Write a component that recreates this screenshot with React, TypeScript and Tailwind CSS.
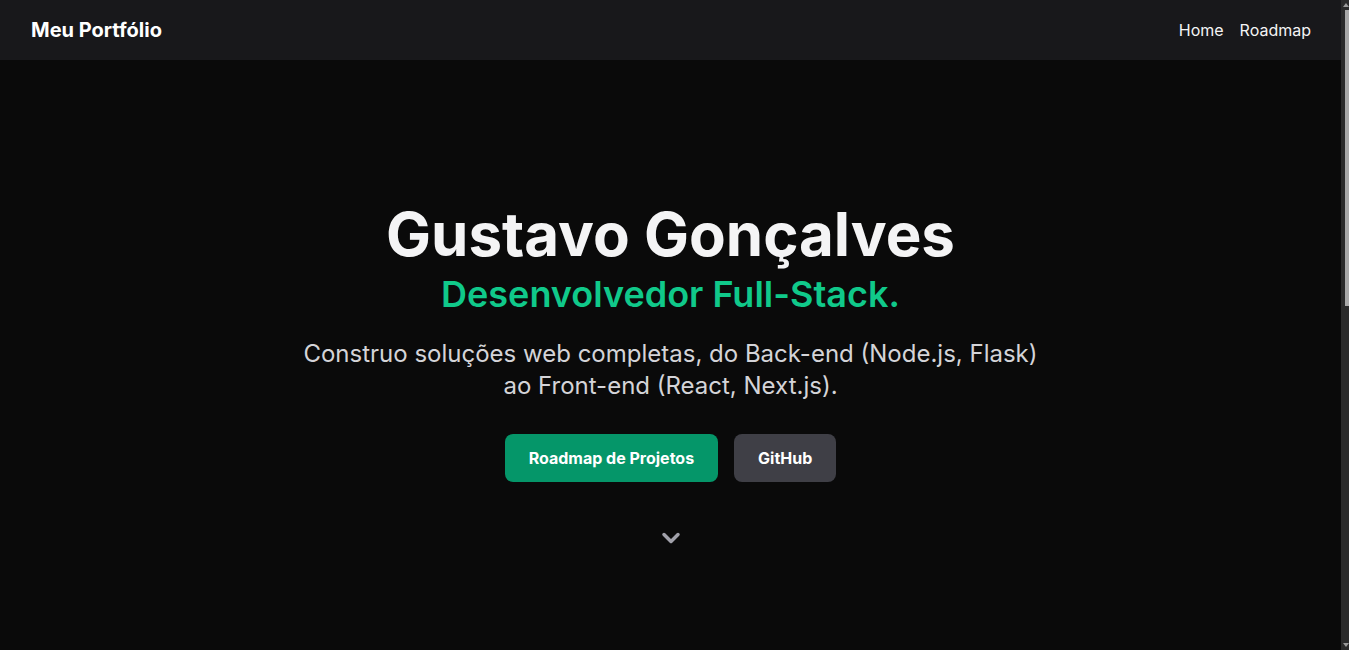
import React from "react";

export default function App() {
  return (
    <div
      className="flex h-screen overflow-hidden bg-[#0a0a0a] text-white"
      style={{ fontFamily: "Inter, 'Noto Sans', sans-serif" }}
    >
      <main className="flex-1 min-w-0 h-full overflow-hidden">
        <header className="h-[60px] bg-[#18181b] flex items-center justify-between pl-[31px] pr-[30px]">
          <div className="text-[20px] font-bold text-white">Meu Portfólio</div>
          <nav className="flex items-center gap-4 text-[16px] text-[#f4f4f5]">
            <a>Home</a>
            <a>Roadmap</a>
          </nav>
        </header>
        <section className="h-[650px] flex flex-col items-center justify-center text-center pb-[16px]">
          <h1 className="text-[60px] leading-[64px] font-bold text-[#f4f4f5]">Gustavo Gonçalves</h1>
          <h2 className="mt-[6px] text-[36px] leading-[44px] font-semibold text-[#10c98a]">Desenvolvedor Full-Stack.</h2>
          <p className="mt-[22px] max-w-[800px] text-[24px] leading-[32px] text-[#d4d4d8]">
            Construo soluções web completas, do Back-end (Node.js, Flask)
            <br />
            ao Front-end (React, Next.js).
          </p>
          <div className="mt-[32px] flex gap-4">
            <button className="h-[48px] px-6 rounded-lg bg-[#059669] text-white font-bold text-[16px]">Roadmap de Projetos</button>
            <button className="h-[48px] px-6 rounded-lg bg-[#3f3f46] text-white font-bold text-[16px]">GitHub</button>
          </div>
          <svg className="mt-[42px] text-[#a1a1aa]" width="28" height="28" viewBox="0 0 24 24" fill="none" stroke="currentColor" strokeWidth="3" strokeLinecap="round" strokeLinejoin="round">
            <path d="M6 9l6 6 6-6" />
          </svg>
        </section>
      </main>
      <aside className="w-[8px] h-full bg-[#2a2a2a] flex flex-col items-end">
        <div className="h-[10px] w-full flex items-center justify-end pr-[0px]">
          <div className="w-0 h-0 border-l-[3px] border-r-[3px] border-b-[4px] border-l-transparent border-r-transparent border-b-[#9a9a9a]" />
        </div>
        <div className="w-[4px] h-[296px] bg-[#a8a8a8]" />
        <div className="flex-1" />
        <div className="h-[10px] w-full flex items-center justify-end">
          <div className="w-0 h-0 border-l-[3px] border-r-[3px] border-t-[4px] border-l-transparent border-r-transparent border-t-[#9a9a9a]" />
        </div>
      </aside>
    </div>
  );
}
